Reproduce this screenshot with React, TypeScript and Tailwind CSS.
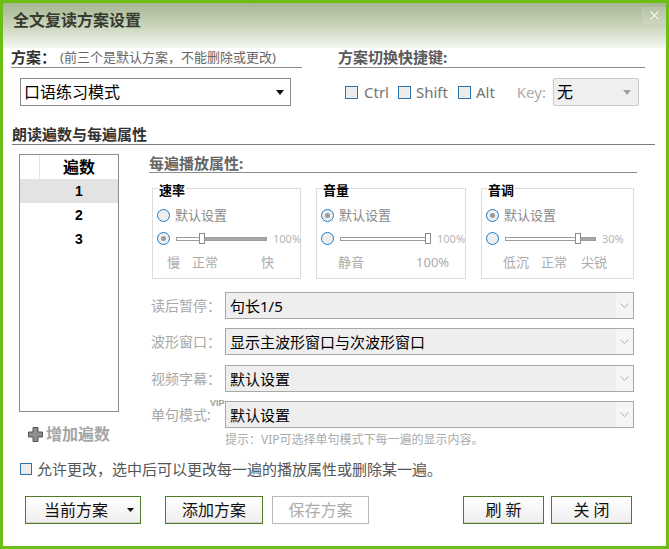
import React from "react";

function Check() {
  return <span className="block w-[13px] h-[13px] border border-[#2a74b0] bg-[#ececec] shrink-0" />;
}

function Radio({ checked }: { checked?: boolean }) {
  return (
    <span className="flex w-[13px] h-[13px] rounded-full border border-[#1e7bc8] bg-[#eeeeee] items-center justify-center shrink-0">
      {checked && <span className="block w-[5px] h-[5px] rounded-full bg-[#9a9a9a]" />}
    </span>
  );
}

function Slider({ pos }: { pos: number }) {
  return (
    <div className="relative w-[91px] h-[11px] flex items-center ml-[6px] shrink-0">
      <div className="w-full h-[4px] border border-[#9c9c9c] bg-white flex">
        <div style={{ width: pos }} />
        <div className="flex-1 bg-[#a9a9a9]" />
      </div>
      <div
        className="absolute top-0 w-[6px] h-[11px] bg-white border border-[#8a8a8a]"
        style={{ left: Math.min(pos - 3, 85) }}
      />
    </div>
  );
}

function Group({
  title,
  w,
  first,
  pos,
  pct,
  labels,
}: {
  title: string;
  w: string;
  first: boolean;
  pos: number;
  pct: string;
  labels: React.ReactNode;
}) {
  return (
    <div className={`relative border border-[#dcdcdc] h-[91px] ${w} shrink-0`}>
      <span className="absolute top-[-6px] left-[5px] bg-white px-[1px] text-[13px] font-bold leading-[14px] text-black">
        {title}
      </span>
      <div className="pt-[19px] pl-[4px]">
        <div className="flex items-center h-[15px]">
          <Radio checked={first} />
          <span className="ml-[5px] text-[13px] leading-[15px] text-[#8a8a8a]">默认设置</span>
        </div>
        <div className="flex items-center h-[15px] mt-[8px]">
          <Radio checked={!first} />
          <Slider pos={pos} />
          <span className="ml-[6px] text-[11px] leading-[15px] text-[#b5b5b5]">{pct}</span>
        </div>
        <div className="flex items-center h-[16px] mt-[8px] text-[13px] leading-[16px] text-[#ababab]">
          {labels}
        </div>
      </div>
    </div>
  );
}

function Chevron() {
  return (
    <svg width="9" height="6" viewBox="0 0 9 6">
      <path d="M0.5 0.5 L4.5 4.5 L8.5 0.5" fill="none" stroke="#b0b0b0" strokeWidth="1" />
    </svg>
  );
}

function FormRow({ label, value, vip, mt }: { label: string; value: string; vip?: boolean; mt: string }) {
  return (
    <div className={`flex items-center h-[27px] ${mt}`}>
      <div className="relative w-[76px] pl-[2px] text-[14px] leading-[14px] text-[#a8a8a8]">
        {label}
        {vip && (
          <span className="absolute z-10 top-[-9px] left-[61px] text-[9px] font-bold leading-[9px] text-[#a0a0a0] font-['Liberation_Sans',sans-serif]">
            VIP
          </span>
        )}
      </div>
      <div className="w-[409px] h-[27px] border border-[#a8a8a8] bg-[#eeeeee] flex items-center">
        <span className="flex-1 pl-[4px] text-[15px] leading-[20px] text-black">{value}</span>
        <div className="w-[17px] h-full bg-[#f5f5f5] flex items-center justify-center">
          <Chevron />
        </div>
      </div>
    </div>
  );
}

function Btn({ children, w, ml, disabled }: { children: React.ReactNode; w: string; ml: string; disabled?: boolean }) {
  return (
    <div
      className={`${w} ${ml} h-[28px] flex items-center justify-center text-[16px] leading-[20px] ${
        disabled
          ? "border border-[#b8b8b8] bg-white text-[#ababab]"
          : "border border-[#4f7a28] bg-gradient-to-b from-white to-[#eeeeee] text-[#111] shadow-[inset_0_-1px_0_#cfcfcf]"
      }`}
    >
      {children}
    </div>
  );
}

export default function App() {
  return (
    <div className="w-[669px] h-[549px] border-[3px] border-[#6bbf14] bg-white flex flex-col font-['Noto_Sans','Noto_Sans_CJK_SC',sans-serif] overflow-hidden">
      {/* Title bar */}
      <div className="relative h-[45px] shrink-0 bg-gradient-to-b from-[#a7b593] via-[#c9d4ba] to-[#f4f7f0] pl-[10px] pt-[5px]">
        <span className="text-[16px] font-bold leading-[22px] text-[#363b30]">全文复读方案设置</span>
        <div className="absolute right-0 top-[4px] w-[24px] h-[17px] border-l border-[#c4cdb8] bg-white/10 flex items-center justify-center">
          <svg width="11" height="11" viewBox="0 0 11 11">
            <path d="M1.5 1.5 L9.5 9.5 M9.5 1.5 L1.5 9.5" stroke="#b7c2aa" strokeWidth="3" />
            <path d="M1.5 1.5 L9.5 9.5 M9.5 1.5 L1.5 9.5" stroke="#f4f6f0" strokeWidth="1.4" />
          </svg>
        </div>
      </div>

      {/* Row A headers */}
      <div className="flex h-[20px] shrink-0">
        <div className="ml-[8px] w-[291px] h-[20px] border-b border-[#8c8c8c] flex items-end">
          <span className="text-[15px] font-bold leading-[19px] text-[#333]">方案：</span>
          <span className="ml-[4px] text-[13px] leading-[19px] text-[#666]">(前三个是默认方案，不能删除或更改)</span>
        </div>
        <div className="ml-[36px] w-[307px] h-[20px] border-b border-[#8c8c8c] flex items-end">
          <span className="text-[15px] font-bold leading-[19px] text-[#5a5a5a]">方案切换快捷键:</span>
        </div>
      </div>

      {/* Row B */}
      <div className="flex items-center h-[28px] mt-[10px] shrink-0">
        <div className="ml-[17px] w-[271px] h-[28px] border border-[#8a8a8a] bg-white flex items-center">
          <span className="flex-1 pl-[3px] text-[16px] leading-[20px] text-black">口语练习模式</span>
          <svg width="8" height="5" viewBox="0 0 8 5" className="mr-[6px]">
            <path d="M0 0 L8 0 L4 5 Z" fill="#111" />
          </svg>
        </div>
        <div className="ml-[54px]">
          <Check />
        </div>
        <span className="ml-[6px] text-[15px] leading-[20px] text-[#737373]">Ctrl</span>
        <div className="ml-[9px]">
          <Check />
        </div>
        <span className="ml-[5px] text-[15px] leading-[20px] text-[#737373]">Shift</span>
        <div className="ml-[10px]">
          <Check />
        </div>
        <span className="ml-[5px] text-[15px] leading-[20px] text-[#737373]">Alt</span>
        <span className="ml-[22px] text-[15px] leading-[20px] text-[#ababab]">Key:</span>
        <div className="ml-[7px] w-[86px] h-[28px] border border-[#c8c8c8] rounded-[2px] bg-[#efefef] flex items-center">
          <span className="flex-1 pl-[3px] text-[16px] leading-[20px] text-black">无</span>
          <svg width="8" height="5" viewBox="0 0 8 5" className="mr-[7px]">
            <path d="M0 0 L8 0 L4 5 Z" fill="#a0a0a0" />
          </svg>
        </div>
      </div>

      {/* Row C */}
      <div className="ml-[9px] w-[643px] h-[20px] mt-[19px] border-b border-[#7a7a7a] flex items-end shrink-0">
        <span className="text-[15px] font-bold leading-[19px] text-[#333]">朗读遍数与每遍属性</span>
      </div>

      {/* Row D */}
      <div className="flex items-start mt-[9px] shrink-0">
        <div className="ml-[16px] w-[100px] flex flex-col">
          <div className="h-[258px] border border-[#8c8c8c] bg-white">
            <div className="flex h-[24px]">
              <div className="w-[20px] h-full border-r border-[#e3e3e3]" />
              <div className="flex-1 text-center text-[16px] font-bold leading-[24px] text-black">遍数</div>
            </div>
            {["1", "2", "3"].map((n, i) => (
              <div key={n} className={`flex h-[24px] ${i === 0 ? "bg-[#e3e3e3]" : ""}`}>
                <div className="w-[20px]" />
                <div className="flex-1 text-center text-[14px] font-bold leading-[24px] text-black font-['Liberation_Sans',sans-serif]">
                  {n}
                </div>
              </div>
            ))}
          </div>
          <div className="mt-[12px] ml-[9px] flex items-center h-[20px]">
            <svg width="15" height="15" viewBox="0 0 15 15">
              <path
                d="M5 0.5 H10 V5 H14.5 V10 H10 V14.5 H5 V10 H0.5 V5 H5 Z"
                fill="#8e8e8e"
                stroke="#555"
                strokeWidth="1"
              />
            </svg>
            <span className="ml-[3px] text-[16px] font-bold leading-[20px] text-[#a5a5a5]">增加遍数</span>
          </div>
        </div>

        <div className="ml-[30px] w-[488px] flex flex-col">
          <div className="h-[19px] border-b border-[#8c8c8c] flex items-end">
            <span className="text-[15px] font-bold leading-[18px] text-[#666]">每遍播放属性:</span>
          </div>
          <div className="flex mt-[15px] ml-[3px]">
            <Group
              title="速率"
              w="w-[149px]"
              first={false}
              pos={26}
              pct="100%"
              labels={
                <>
                  <span className="ml-[10px]">慢</span>
                  <span className="ml-[12px]">正常</span>
                  <span className="ml-[43px]">快</span>
                </>
              }
            />
            <div className="ml-[15px]">
              <Group
                title="音量"
                w="w-[150px]"
                first={true}
                pos={91}
                pct="100%"
                labels={
                  <>
                    <span className="ml-[17px]">静音</span>
                    <span className="ml-[52px]">100%</span>
                  </>
                }
              />
            </div>
            <div className="ml-[15px]">
              <Group
                title="音调"
                w="w-[153px]"
                first={true}
                pos={73}
                pct="30%"
                labels={
                  <>
                    <span className="ml-[17px]">低沉</span>
                    <span className="ml-[12px]">正常</span>
                    <span className="ml-[14px]">尖锐</span>
                  </>
                }
              />
            </div>
          </div>
          <FormRow mt="mt-[13px]" label="读后暂停：" value="句长1/5" />
          <FormRow mt="mt-[9px]" label="波形窗口：" value="显示主波形窗口与次波形窗口" />
          <FormRow mt="mt-[10px]" label="视频字幕：" value="默认设置" />
          <FormRow mt="mt-[9px]" label="单句模式:" value="默认设置" vip />
          <div className="ml-[76px] mt-[4px] text-[12px] leading-[16px] text-[#ababab]">
            提示：VIP可选择单句模式下每一遍的显示内容。
          </div>
        </div>
      </div>

      {/* Check row */}
      <div className="ml-[17px] mt-[11px] flex items-center h-[20px] shrink-0">
        <span className="block w-[12px] h-[12px] border border-[#2a74b0] bg-[#ececec]" />
        <span className="ml-[5px] text-[15px] leading-[20px] text-[#555]">
          允许更改，选中后可以更改每一遍的播放属性或删除某一遍。
        </span>
      </div>

      {/* Buttons */}
      <div className="flex mt-[17px] h-[28px] shrink-0">
        <div className="ml-[22px] w-[116px] h-[28px] flex items-center border border-[#4f7a28] bg-gradient-to-b from-white to-[#eeeeee] shadow-[inset_0_-1px_0_#cfcfcf] text-[16px] leading-[20px] text-[#111]">
          <span className="pl-[18px]">当前方案</span>
          <svg width="7" height="4" viewBox="0 0 7 4" className="ml-auto mr-[6px]">
            <path d="M0 0 L7 0 L3.5 4 Z" fill="#111" />
          </svg>
        </div>
        <Btn w="w-[98px]" ml="ml-[24px]">添加方案</Btn>
        <Btn w="w-[97px]" ml="ml-[9px]" disabled>
          保存方案
        </Btn>
        <Btn w="w-[81px]" ml="ml-[94px]">刷 新</Btn>
        <Btn w="w-[81px]" ml="ml-[7px]">关 闭</Btn>
      </div>
    </div>
  );
}
